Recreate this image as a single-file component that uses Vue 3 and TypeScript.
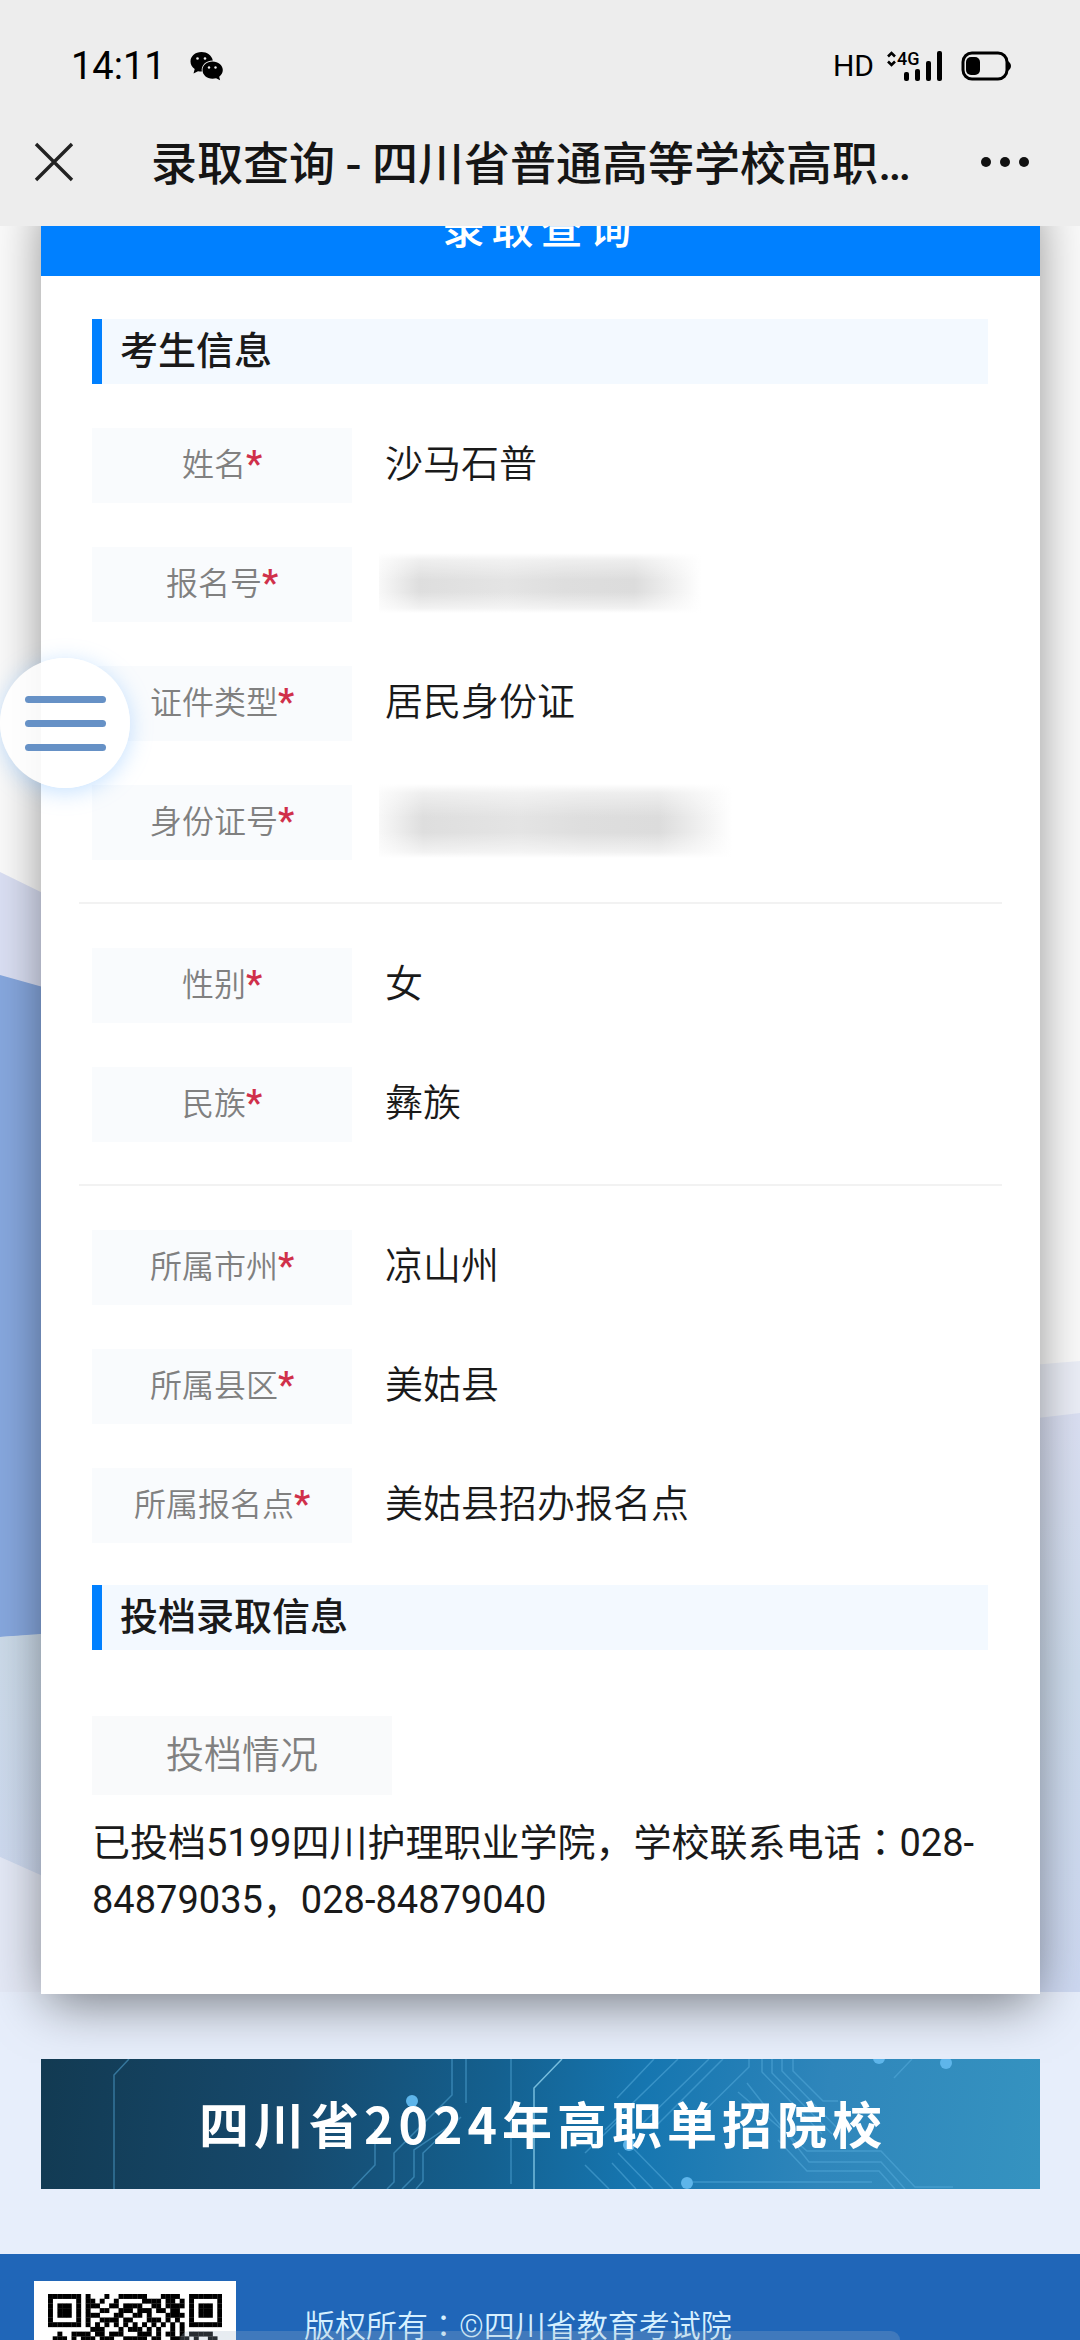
<script setup lang="ts">
interface Field {
  label: string
  value?: string
  masked?: 'short' | 'long'
}

const groups: Field[][] = [
  [
    { label: '姓名', value: '沙马石普' },
    { label: '报名号', masked: 'short' },
    { label: '证件类型', value: '居民身份证' },
    { label: '身份证号', masked: 'long' },
  ],
  [
    { label: '性别', value: '女' },
    { label: '民族', value: '彝族' },
  ],
  [
    { label: '所属市州', value: '凉山州' },
    { label: '所属县区', value: '美姑县' },
    { label: '所属报名点', value: '美姑县招办报名点' },
  ],
]

const qrRows: string[] = [
  '1111111010001001111110001111001111111',
  '1000001011010010000011110110101000001',
  '1011101011100110111100110111101011101',
  '1011101010011001110111011011001011101',
  '1011101011100011001101000111101011101',
  '1000001010011110110001110101001000001',
  '1111111010101010101010101010101111111',
  '0000000001110001011101010010100000000',
  '0010011110110111000111010110101111100',
  '0111010111011100111110110011110100110',
  '1101101010110111010001101011011010101',
]

const qrCells = qrRows.flatMap((row, y) =>
  [...row].flatMap((cell, x) => (cell === '1' ? [{ x, y }] : [])),
)
</script>

<template>
  <div class="screen">
    <header class="top">
      <div class="status">
        <span class="time">14:11</span>
        <svg class="wechat" viewBox="0 0 33 30" width="33" height="30" aria-hidden="true">
          <path
            d="M11.500 1C5.200 1 .5 5.200.5 10.500c0 3.200 1.600 5.700 4.200 7.500L3.500 22.500l4.500-2.300c1.200.3 2.300.4 3.800.4C11 14.500 15.500 9.500 22.800 9.500 21.700 4.200 17 1 11.500 1z"
          />
          <path
            d="M22.500 10.500c-5.800 0-10 3.800-10 8.600s4.200 8.700 10 8.700c1.300 0 2.500-.2 3.600-.5l4 2-.9-3.500c2.200-1.600 3.600-4 3.600-6.700 0-4.800-4.500-8.600-10.300-8.600z"
          />
          <g fill="#ededed">
            <circle cx="7.500" cy="7.500" r="1.300" />
            <circle cx="15" cy="7.500" r="1.300" />
            <circle cx="19" cy="16.500" r="1.200" />
            <circle cx="25.500" cy="16.500" r="1.200" />
          </g>
        </svg>
        <span class="hd">HD</span>
        <svg class="signal" viewBox="0 0 58 32" width="58" height="32" aria-hidden="true">
          <path d="M2 6.500 5.500 3 9 6.500M2 11.500 5.500 15 9 11.500" fill="none" stroke="#000" stroke-width="2.600" />
          <text x="11" y="15" class="net">4G</text>
          <rect x="18" y="22" width="5" height="9" rx="2" />
          <rect x="29" y="19" width="5" height="12" rx="2" />
          <rect x="40" y="11" width="5" height="20" rx="2" />
          <rect x="51" y="1" width="5" height="30" rx="2" />
        </svg>
        <svg viewBox="0 0 51 30" width="51" height="30" aria-hidden="true">
          <rect x="2" y="2" width="44" height="26" rx="9" fill="none" stroke="#000" stroke-width="3" />
          <rect x="5" y="6" width="14" height="18" rx="5" />
          <path d="M46 9l3 3q2 3 0 6l-3 3z" />
        </svg>
      </div>
      <nav class="nav">
        <button type="button" class="icon-btn" aria-label="关闭">
          <svg viewBox="0 0 40 40" width="40" height="40">
            <path d="M2 2 38 38M38 2 2 38" fill="none" stroke="#222" stroke-width="3.400" />
          </svg>
        </button>
        <h1 class="title">录取查询 - 四川省普通高等学校高职<span class="dots">…</span></h1>
        <button type="button" class="icon-btn" aria-label="更多">
          <svg viewBox="0 0 50 12" width="50" height="12">
            <circle cx="6" cy="6" r="5" fill="#111" />
            <circle cx="25" cy="6" r="5" fill="#111" />
            <circle cx="44" cy="6" r="5" fill="#111" />
          </svg>
        </button>
      </nav>
    </header>

    <div class="page">
      <svg class="backdrop" viewBox="0 0 1080 2114" preserveAspectRatio="none" aria-hidden="true">
        <defs>
          <linearGradient id="paleLeft" x1="0" y1="0" x2="0" y2="1">
            <stop offset="0" stop-color="#ccdbe9" />
            <stop offset="1" stop-color="#cfdaf2" />
          </linearGradient>
          <linearGradient id="paleRight" x1="0" y1="0" x2="0" y2="1">
            <stop offset="0" stop-color="#dce1f4" />
            <stop offset=".45" stop-color="#d0deef" />
            <stop offset="1" stop-color="#ced9f2" />
          </linearGradient>
        </defs>
        <rect width="1080" height="2114" fill="#fbfbfb" />
        <path d="M0 646 200 744V1700H0z" fill="#dbe0f4" />
        <path d="M0 749 200 805V1400L0 1411z" fill="#87a8df" />
        <path d="M0 1411 200 1396V1720L0 1631z" fill="url(#paleLeft)" />
        <path d="M0 1631 200 1720V2114H0z" fill="#e4e9f6" />
        <path d="M900 1150 1080 1135V1768H900z" fill="#eceff8" />
        <path d="M900 1208 1080 1187V1768H900z" fill="url(#paleRight)" />
        <rect y="1766" width="1080" height="348" fill="#e7eefb" />
      </svg>

      <main class="card">
        <h2 class="card-head">录取查询</h2>
        <h3 class="section">考生信息</h3>
        <dl v-for="(group, i) in groups" :key="i" class="group">
          <div v-for="field in group" :key="field.label" class="row">
            <dt class="label">{{ field.label }}<span class="star">*</span></dt>
            <dd class="value">
              <span v-if="field.masked" class="mask" :class="field.masked"></span>
              <template v-else>{{ field.value }}</template>
            </dd>
          </div>
        </dl>
        <h3 class="section">投档录取信息</h3>
        <div class="result">
          <h4 class="result-label">投档情况</h4>
          <p class="result-text">已投档5199四川护理职业学院，学校联系电话<span class="colon">：</span>028-84879035，028-84879040</p>
        </div>
      </main>

      <a href="#schools" class="banner">
        <svg class="circuit" viewBox="0 0 999 130" preserveAspectRatio="none" aria-hidden="true">
          <g fill="none" stroke="#58aedd" stroke-opacity=".5" stroke-width="1.500">
            <path d="M88 0 73 16V130M411 0V36L353 94V123L346 130M425 0V44M470 0V125" />
            <path d="M334 70V106L311 130M410 66 373 91V118L361 130M420 58 382 94V122L375 130" />
            <path d="M613 0 576 39M637 0 564 71M668 0 602 64M682 0 612 70M708 0V8L651 64M578 61 544 94" />
            <path d="M721 0V13L781 75M731 0V14L791 75M741 0V12L797 70M752 0V12L782 42H797" />
            <path d="M697 33 766 92H840L874 128H912M706 24 768 103H840L864 130M737 81 766 112H838L854 130" />
            <path d="M652 123H831M871 0 853 19M544 106 568 130M571 104 595 130M577 94 612 130M587 84 632 130" />
          </g>
          <path d="M521 0 493 29V130" fill="none" stroke="#8fd2ee" stroke-opacity=".8" stroke-width="1.500" />
          <g fill="#5eb5ea">
            <circle cx="371" cy="42" r="6" />
            <circle cx="646" cy="124" r="6" />
            <circle cx="588" cy="86" r="6" />
            <circle cx="838" cy="-1" r="6" />
            <circle cx="905" cy="4" r="6" />
          </g>
        </svg>
        <span class="banner-text">四川省2024年高职单招院校</span>
      </a>

      <footer class="foot">
        <div class="qr">
          <svg viewBox="0 0 37 37" width="174" height="174" role="img" aria-label="二维码">
            <rect v-for="c in qrCells" :key="`${c.x}-${c.y}`" :x="c.x" :y="c.y" width="1.050" height="1.050" />
          </svg>
        </div>
        <p class="copyright">版权所有<span class="colon">：</span>©四川省教育考试院</p>
      </footer>
    </div>

    <button type="button" class="fab" aria-label="菜单">
      <span></span>
      <span></span>
      <span></span>
    </button>
    <div class="home-bar"></div>
  </div>
</template>

<style>
body {
  margin: 0;
}
</style>

<style scoped>
.screen {
  position: relative;
  display: flex;
  flex-direction: column;
  height: 100vh;
  overflow: hidden;
  color: #1a1a1a;
  font-family: Roboto, 'Noto Sans CJK SC', sans-serif;
}

h1,
h2,
h3,
h4,
p,
dl,
dd {
  margin: 0;
  font-weight: 400;
}

button {
  padding: 0;
  border: 0;
  background: none;
}

.top {
  flex: none;
  background: #ededed;
}

.status {
  display: flex;
  align-items: center;
  height: 64px;
  padding: 34px 68px 0 71px;
  color: #000;
}

.time {
  font-size: 38px;
  line-height: 40px;
}

.wechat {
  margin-left: 24px;
}

.hd {
  margin-left: auto;
  font-size: 30px;
  line-height: 32px;
}

.signal {
  margin: 0 17px 0 12px;
}

.net {
  font-size: 18px;
  font-weight: 500;
}

.nav {
  display: flex;
  align-items: center;
  height: 128px;
  padding: 0 50px 0 34px;
}

.icon-btn {
  display: flex;
}

.title {
  flex: 1;
  margin-left: 77px;
  overflow: hidden;
  color: #151515;
  font-family: 'Noto Sans CJK SC', sans-serif;
  font-size: 46px;
  font-weight: 500;
  line-height: 64px;
  white-space: nowrap;
}

.dots {
  font-family: Roboto, sans-serif;
}

.page {
  position: relative;
  flex: 1;
  min-height: 0;
  overflow: hidden;
}

.backdrop {
  position: absolute;
  inset: 0;
  width: 100%;
  height: 100%;
}

.card {
  position: relative;
  margin: -42px 40px 0 41px;
  padding-bottom: 65px;
  background: #fff;
  box-shadow: 0 14px 50px -6px rgba(0, 0, 0, 0.5);
}

.card-head {
  height: 92px;
  margin-bottom: 43px;
  background: #0080ff;
  color: #fff;
  font-size: 42px;
  font-weight: 500;
  letter-spacing: 7px;
  line-height: 92px;
  text-align: center;
}

.section {
  height: 65px;
  margin: 0 52px 0 51px;
  padding-left: 18px;
  border-left: 10px solid #0080ff;
  background: #f3f9ff;
  font-size: 38px;
  font-weight: 500;
  line-height: 64px;
}

.group {
  display: flex;
  flex-direction: column;
  gap: 44px;
  margin: 0 38px;
  padding: 44px 13px 42px;
  border-bottom: 2px solid #f2f2f2;
}

.group:last-of-type {
  border-bottom: 0;
}

.row {
  display: flex;
  align-items: center;
  gap: 33px;
  height: 75px;
}

.label {
  width: 260px;
  height: 75px;
  background: #f9fbfd;
  color: #808080;
  font-size: 32px;
  font-weight: 350;
  line-height: 74px;
  text-align: center;
}

.star {
  font-size: 36px;
  line-height: 1;
  color: #d0304a;
  font-weight: 600;
}

.value {
  padding-bottom: 4px;
  font-size: 38px;
  font-weight: 350;
  line-height: 56px;
}

.mask {
  display: block;
  height: 60px;
  margin-left: -6px;
  background:
    linear-gradient(
      #fff,
      rgba(255, 255, 255, 0.5) 12%,
      rgba(255, 255, 255, 0) 45% 65%,
      rgba(255, 255, 255, 0.6) 92%,
      #fff
    ),
    linear-gradient(90deg, #f8f8f8, #dedede 12%, #e4e4e4 38%, #dedede 55%, #dcdcdc 76%, #fff 96%);
}

.mask.short {
  width: 336px;
}

.mask.long {
  width: 368px;
  height: 74px;
}

.result {
  padding: 66px 52px 0 51px;
}

.result-label {
  width: 300px;
  height: 79px;
  margin-bottom: 16px;
  background: #f9fafb;
  color: #808080;
  font-size: 38px;
  font-weight: 350;
  line-height: 78px;
  text-align: center;
}

.result-text {
  font-size: 38px;
  line-height: 57px;
}

.colon {
  font-family: 'Noto Sans CJK TC', sans-serif;
}

.banner {
  position: relative;
  display: flex;
  align-items: center;
  justify-content: center;
  height: 130px;
  margin: 65px 40px 65px 41px;
  background: linear-gradient(97deg, #123a52 0, #16496c 25%, #14608f 45%, #1676b0 60%, #2f86bb 78%, #3593c0 100%);
  color: #fff;
  text-decoration: none;
}

.circuit {
  position: absolute;
  inset: 0;
  width: 100%;
  height: 100%;
}

.banner-text {
  position: relative;
  padding: 0 0 4px 5px;
  font-family: 'Noto Sans CJK SC', sans-serif;
  font-size: 50px;
  font-weight: 700;
  letter-spacing: 5px;
  line-height: 72px;
}

.foot {
  position: relative;
  display: flex;
  gap: 68px;
  padding: 27px 34px 34px;
  background: #2066b8;
}

.qr {
  display: flex;
  padding: 13px 14px;
  background: #fff;
}

.copyright {
  margin-top: 21px;
  color: #d6f0ff;
  font-size: 31px;
  font-weight: 350;
  line-height: 44px;
}

.fab {
  position: absolute;
  top: 658px;
  left: 0;
  display: flex;
  flex-direction: column;
  align-items: center;
  justify-content: center;
  gap: 17px;
  width: 130px;
  height: 130px;
  border-radius: 50%;
  background: rgba(255, 255, 255, 0.88);
  box-shadow: 0 4px 22px rgba(110, 180, 255, 0.4);
}

.fab span {
  width: 81px;
  height: 7px;
  border-radius: 4px;
  background: #6691c6;
}

.home-bar {
  position: absolute;
  bottom: 0;
  left: 50%;
  width: 720px;
  height: 9px;
  margin-left: -360px;
  border-radius: 9px 9px 0 0;
  background: rgba(160, 180, 200, 0.25);
}
</style>
